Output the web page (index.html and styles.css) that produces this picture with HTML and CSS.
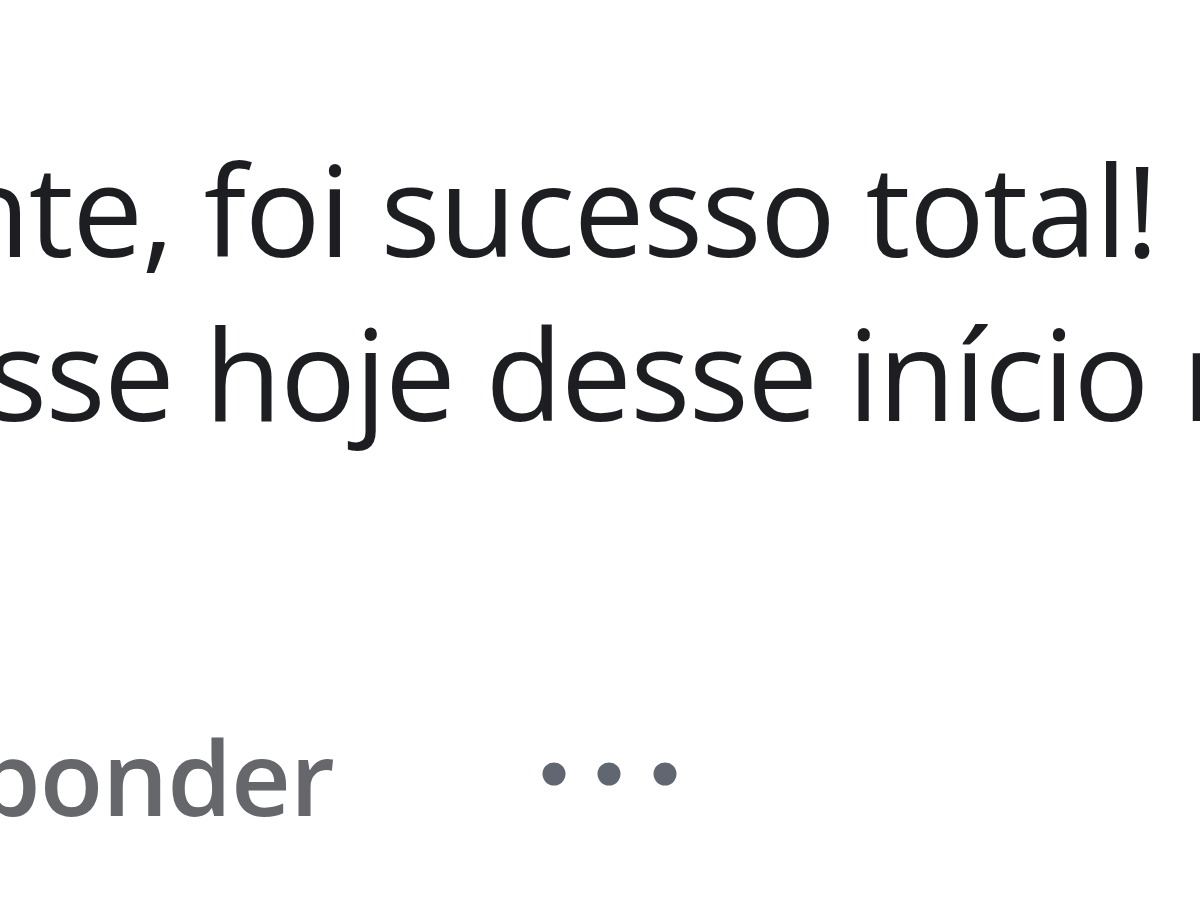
FILE: index.html
```html
<!DOCTYPE html>
<html lang="pt-BR">
<head>
<meta charset="utf-8">
<title>Comentário</title>
<link rel="stylesheet" href="styles.css">
</head>
<body>
<div class="comment">
  <div class="bubble">
    <p class="line line-first">nte, foi sucesso total!</p>
    <p class="line line-second">sse hoje desse início <span class="next-word">n</span></p>
  </div>
  <div class="actions">
    <span class="reply">ponder</span>
    <span class="more" aria-label="Mais opções">
      <svg viewBox="0 0 136 24" width="136" height="24" aria-hidden="true">
        <circle cx="12" cy="12" r="11.5"></circle>
        <circle cx="67" cy="12" r="11.5"></circle>
        <circle cx="123" cy="12" r="11.5"></circle>
      </svg>
    </span>
  </div>
</div>
</body>
</html>
```
FILE: styles.css
```css
html, body {
  margin: 0;
  padding: 0;
  background: #ffffff;
}

body {
  width: 1200px;
  height: 900px;
  overflow: hidden;
  font-family: "Open Sans", "Noto Sans", "DejaVu Sans", sans-serif;
}

.comment {
  padding-top: 126px;
  display: flex;
  flex-direction: column;
}

.bubble {
  display: flex;
  flex-direction: column;
}

.line {
  margin: 0;
  font-size: 126px;
  line-height: 164px;
  letter-spacing: -1.5px;
  color: #1c1e21;
  white-space: nowrap;
  font-weight: 400;
}

.line-first {
  margin-left: -47px;
}

.line-second {
  margin-left: -13px;
}

.next-word {
  margin-left: 3px;
}

.actions {
  margin-top: 270px;
  display: flex;
  align-items: center;
  gap: 208px;
  margin-left: -24px;
}

.reply {
  font-size: 104px;
  line-height: 104px;
  letter-spacing: -1px;
  font-weight: 600;
  color: #65676b;
  white-space: nowrap;
}

.more {
  display: flex;
  align-items: center;
  margin-bottom: 4px;
}

.more svg {
  fill: #606770;
  display: block;
}
```
